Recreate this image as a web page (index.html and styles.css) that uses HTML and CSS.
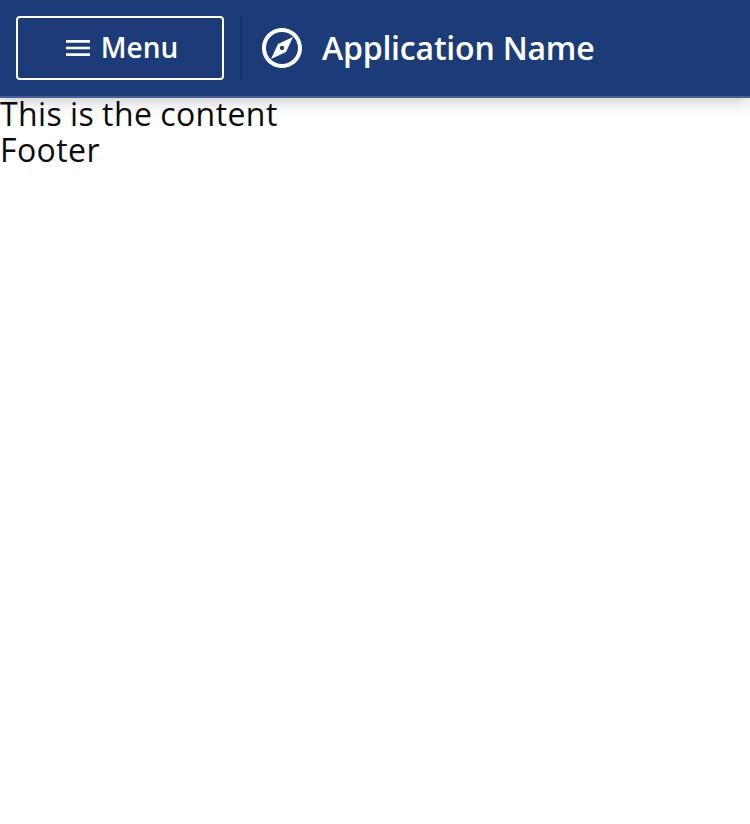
FILE: index.html
```html
<!DOCTYPE html>
<html lang="en">
<head>
<meta charset="utf-8">
<title>Application Name</title>
<link rel="stylesheet" href="styles.css">
</head>
<body>
<header class="header">
  <button class="menu-button" type="button">
    <svg class="menu-icon" viewBox="0 0 24 24"><path d="M3 18h18v-2H3v2zm0-5h18v-2H3v2zm0-7v2h18V6H3z"/></svg>
    <span class="menu-label">Menu</span>
  </button>
  <div class="divider"></div>
  <div class="brand">
    <svg class="brand-icon" viewBox="0 0 24 24"><path d="M12 2C6.48 2 2 6.48 2 12s4.48 10 10 10 10-4.48 10-10S17.52 2 12 2zm0 18c-4.41 0-8-3.59-8-8s3.590-8 8-8 8 3.590 8 8-3.590 8-8 8zm-5.500-2.500l7.510-3.490L17.500 6.500 9.990 9.990 6.500 17.500zm5.500-6.600c.61 0 1.100.49 1.100 1.100s-.49 1.100-1.100 1.100-1.100-.49-1.100-1.100.49-1.100 1.100-1.100z"/></svg>
    <span class="brand-name">Application Name</span>
  </div>
</header>
<main class="content">This is the content</main>
<footer class="footer">Footer</footer>
</body>
</html>
```
FILE: styles.css
```css
* { box-sizing: border-box; }
body {
  margin: 0;
  background: #fff;
  color: #0b0c0d;
  font: 400 32px/36px "Open Sans", sans-serif;
  letter-spacing: 0.42px;
  word-spacing: -0.9px;
}
svg { display: block; fill: currentColor; flex: none; }
.header {
  display: flex;
  align-items: center;
  height: 98px;
  margin-bottom: -2px;
  padding: 0 16px;
  background: #1b3c79;
  border-bottom: 2px solid #456097;
  box-shadow: 0 2px 16px rgba(0, 0, 0, 0.25);
  color: #fff;
}
.menu-button {
  display: flex;
  align-items: center;
  justify-content: center;
  gap: 7px;
  width: 208px;
  height: 64px;
  padding: 0;
  border: 2px solid #fff;
  border-radius: 4px;
  background: none;
  color: inherit;
  font: 600 28px/34px "Open Sans", sans-serif;
}
.menu-icon { width: 32px; height: 32px; }
.menu-label { padding-bottom: 2px; }
.divider { width: 2px; height: 64px; margin-left: 16px; background: #173162; }
.brand { display: flex; align-items: center; gap: 16px; margin-left: 16px; }
.brand-icon { width: 48px; height: 48px; }
.brand-name { font-weight: 600; letter-spacing: -0.2px; word-spacing: 0; }
```
